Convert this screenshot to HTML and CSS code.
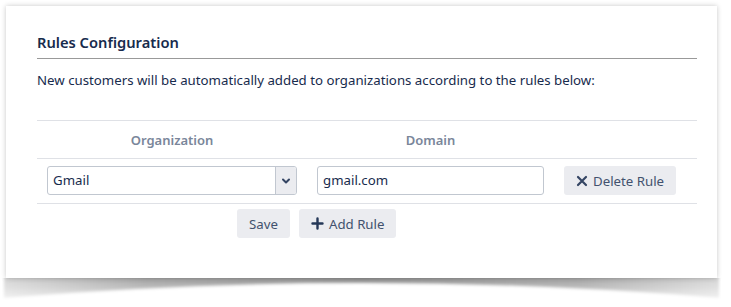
FILE: index.html
```html
<!DOCTYPE html>
<html lang="en">
<head>
  <meta charset="UTF-8" />
  <title>Rules Configuration</title>
  <link rel="stylesheet" href="styles.css">
</head>
<body>
  <div class="card">
    <h2 class="card-title">Rules Configuration</h2>
    <p class="intro">New customers will be automatically added to organizations according to the rules below:</p>

    <table class="rules">
      <colgroup>
        <col class="col-org">
        <col class="col-domain">
        <col class="col-action">
      </colgroup>
      <thead>
        <tr>
          <th>Organization</th>
          <th>Domain</th>
          <th></th>
        </tr>
      </thead>
      <tbody>
        <tr>
          <td>
            <div class="select-box">
              <span class="select-value">Gmail</span>
              <span class="select-arrow">
                <svg width="10" height="8" viewBox="0 0 10 8"><path d="M2 2.5 L5 5.5 L8 2.5" fill="none" stroke="#344563" stroke-width="2" stroke-linecap="round" stroke-linejoin="round"/></svg>
              </span>
            </div>
          </td>
          <td>
            <div class="text-input">gmail.com</div>
          </td>
          <td>
            <button class="btn">
              <svg width="12" height="12" viewBox="0 0 12 12"><path d="M2 2 L10 10 M10 2 L2 10" stroke="#344563" stroke-width="2.2" stroke-linecap="round"/></svg>
              Delete Rule
            </button>
          </td>
        </tr>
      </tbody>
    </table>

    <div class="actions">
      <button class="btn">Save</button>
      <button class="btn">
        <svg width="13" height="13" viewBox="0 0 13 13"><path d="M6.5 1.5 V11.5 M1.5 6.5 H11.5" stroke="#253858" stroke-width="2.4" stroke-linecap="round"/></svg>
        Add Rule
      </button>
    </div>
  </div>

  <!-- curled shadow under the card -->
  <svg class="card-shadow" width="719" height="26" viewBox="0 0 719 26">
    <defs>
      <linearGradient id="shadeX" x1="0" x2="1" y1="0" y2="0">
        <stop offset="0" stop-color="#000" stop-opacity="0.16"/>
        <stop offset="0.2" stop-color="#000" stop-opacity="0.36"/>
        <stop offset="0.5" stop-color="#000" stop-opacity="0.44"/>
        <stop offset="0.8" stop-color="#000" stop-opacity="0.36"/>
        <stop offset="1" stop-color="#000" stop-opacity="0.16"/>
      </linearGradient>
      <linearGradient id="fadeY" x1="0" x2="0" y1="0" y2="1">
        <stop offset="0" stop-color="#fff" stop-opacity="1"/>
        <stop offset="0.35" stop-color="#fff" stop-opacity="0.75"/>
        <stop offset="1" stop-color="#fff" stop-opacity="0.15"/>
      </linearGradient>
      <mask id="fade">
        <rect x="0" y="0" width="719" height="26" fill="url(#fadeY)"/>
      </mask>
      <filter id="soft" x="-5%" y="-50%" width="110%" height="200%">
        <feGaussianBlur stdDeviation="1.6"/>
      </filter>
    </defs>
    <g mask="url(#fade)">
      <path d="M2,-4 H717 V20 Q359,-10 2,20 Z" fill="url(#shadeX)" filter="url(#soft)"/>
    </g>
  </svg>
</body>
</html>
```

FILE: styles.css
```css
body {
  margin: 0;
  padding: 6px 0 0 6px;
  background: #fff;
  font-family: "Noto Sans", "Open Sans", sans-serif;
  color: #172b4d;
}

.card {
  position: relative;
  box-sizing: border-box;
  width: 711px;
  height: 272px;
  padding: 26px 20px 0 31px;
  background: #fff;
  box-shadow: 0 0 5px rgba(0,0,0,0.22);
}

.card-shadow {
  display: block;
  margin-left: -4px;
}

.card-title {
  margin: 0;
  padding-bottom: 6px;
  font-size: 14.7px;
  font-weight: 600;
  line-height: 20px;
  border-bottom: 1px solid #999;
}

.intro {
  margin: 11px 0 0;
  font-size: 13.25px;
  line-height: 20px;
}

.rules {
  width: 100%;
  margin-top: 30px;
  border-collapse: collapse;
  border-top: 1px solid #dfe1e6;
}

.col-org { width: 270px; }
.col-domain { width: 247px; }

.rules th {
  padding: 9px 0 8px;
  font-size: 13px;
  font-weight: 600;
  line-height: 20px;
  color: #7a869a;
  text-align: center;
  border-bottom: 1px solid #dfe1e6;
}

.rules td {
  padding: 7px 10px 8px;
  border-bottom: 1px solid #dfe1e6;
}

.select-box {
  display: flex;
  height: 29px;
  box-sizing: border-box;
  border: 1px solid #c1c7d0;
  border-radius: 3px;
  overflow: hidden;
}

.select-value {
  flex: 1;
  padding-left: 5px;
  font-size: 13.25px;
  line-height: 27px;
}

.select-arrow {
  display: flex;
  align-items: center;
  justify-content: center;
  width: 20px;
  background: #ebecf0;
  border-left: 1px solid #c1c7d0;
}

.text-input {
  height: 29px;
  box-sizing: border-box;
  padding-left: 5px;
  border: 1px solid #c1c7d0;
  border-radius: 3px;
  font-size: 13.25px;
  line-height: 27px;
}

.btn {
  display: inline-flex;
  align-items: center;
  gap: 5px;
  height: 29px;
  padding: 0 12px;
  border: none;
  border-radius: 3px;
  background: #ebecf0;
  color: #42526e;
  font-family: inherit;
  font-size: 13.25px;
}

.actions {
  display: flex;
  gap: 9px;
  margin: 5px 0 0 200px;
}
```
